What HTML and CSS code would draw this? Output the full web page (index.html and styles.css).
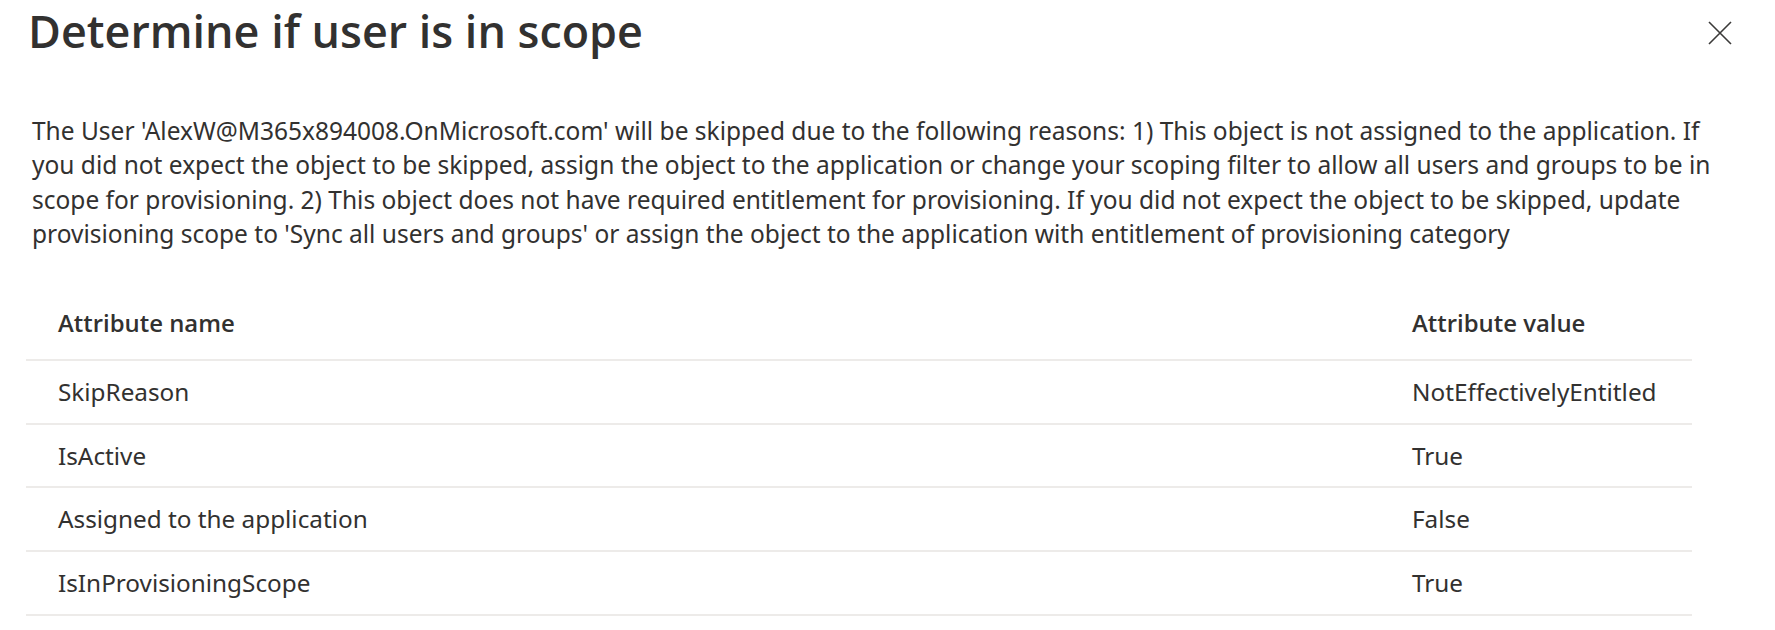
FILE: index.html
```html
<!DOCTYPE html>
<html lang="en">
<head>
<meta charset="utf-8">
<title>Determine if user is in scope</title>
<link rel="stylesheet" href="styles.css">
</head>
<body>
<div class="panel">
  <div class="panel-header">
    <h1 class="title">Determine if user is in scope</h1>
    <button class="close" aria-label="Close">
      <svg width="24" height="24" viewBox="0 0 24 24" aria-hidden="true"><path d="M1 1L23 23M23 1L1 23" fill="none" stroke="#3b3a39" stroke-width="1.6"/></svg>
    </button>
  </div>
  <p class="message">The User 'AlexW@M365x894008.OnMicrosoft.com' will be skipped due to the following reasons: 1) This object is not assigned to the application. If you did not expect the object to be skipped, assign the object to the application or change your scoping filter to allow all users and groups to be in scope for provisioning. 2) This object does not have required entitlement for provisioning. If you did not expect the object to be skipped, update provisioning scope to 'Sync all users and groups' or assign the object to the application with entitlement of provisioning category</p>
  <div class="attr-table">
    <div class="attr-row attr-head">
      <div class="cell">Attribute name</div>
      <div class="cell">Attribute value</div>
    </div>
    <div class="attr-row">
      <div class="cell">SkipReason</div>
      <div class="cell">NotEffectivelyEntitled</div>
    </div>
    <div class="attr-row">
      <div class="cell">IsActive</div>
      <div class="cell">True</div>
    </div>
    <div class="attr-row">
      <div class="cell">Assigned to the application</div>
      <div class="cell">False</div>
    </div>
    <div class="attr-row">
      <div class="cell">IsInProvisioningScope</div>
      <div class="cell">True</div>
    </div>
  </div>
</div>
</body>
</html>
```
FILE: styles.css
```css
html, body {
  margin: 0;
  background: #ffffff;
}
body {
  font-family: "Noto Sans", "Open Sans", sans-serif;
  color: #323130;
}
.panel {
  padding: 0 0 0 26px;
}
.panel-header {
  display: flex;
  justify-content: space-between;
  align-items: flex-start;
  padding-right: 43px;
}
.title {
  margin: 0 0 0 2px;
  padding-top: 1px;
  font-family: "Open Sans", "Noto Sans", sans-serif;
  font-size: 44.9px;
  font-weight: 600;
  line-height: 60px;
  color: #323130;
}
.close {
  margin-top: 21px;
  padding: 0;
  border: 0;
  background: transparent;
  width: 24px;
  height: 24px;
  display: block;
  cursor: pointer;
}
.close svg {
  display: block;
}
.message {
  margin: 53px 40px 0 6px;
  font-size: 24.5px;
  line-height: 34.3px;
}
.attr-table {
  margin: 41px 83px 0 0;
}
.attr-row {
  display: grid;
  grid-template-columns: 1fr 312px;
  border-bottom: 2px solid #edebe9;
  font-size: 24.3px;
  line-height: 61.6px;
}
.attr-row .cell {
  padding-left: 32px;
  white-space: nowrap;
}
.attr-head {
  font-family: "Open Sans", "Noto Sans", sans-serif;
  font-size: 23.9px;
  font-weight: 600;
  line-height: 34px;
  padding: 14px 0 19px;
}
```
